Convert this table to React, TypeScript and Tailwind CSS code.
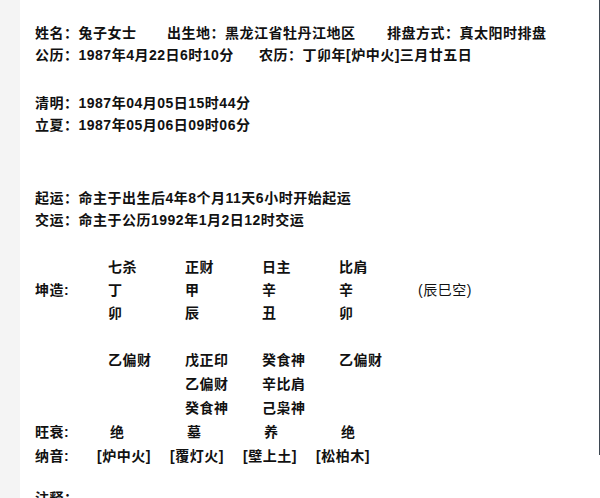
export default function App() {
  const gods = ["七杀", "正财", "日主", "比肩"]
  const stems = ["丁", "甲", "辛", "辛"]
  const branches = ["卯", "辰", "丑", "卯"]
  const hidden = [
    ["乙偏财", "戊正印", "癸食神", "乙偏财"],
    ["", "乙偏财", "辛比肩", ""],
    ["", "癸食神", "己枭神", ""],
  ]
  const states = ["绝", "墓", "养", "绝"]
  const nayin = ["[炉中火]", "[覆灯火]", "[壁上土]", "[松柏木]"]

  return (
    <div className="flex min-h-[498px] bg-white text-[14px] font-bold tracking-[0.5px] text-[#111] font-['Liberation_Sans','Noto_Sans_CJK_SC',sans-serif]">
      {/* left gutter */}
      <div className="w-[20px] shrink-0 bg-[#f4f4f4]" />

      <div className="flex-1 pl-[15px] pt-[22px]">
        <div className="flex h-[22px] items-center whitespace-nowrap">
          <span className="w-[132px]">姓名：兔子女士</span>
          <span className="w-[220px]">出生地：黑龙江省牡丹江地区</span>
          <span>排盘方式：真太阳时排盘</span>
        </div>
        <div className="flex h-[22px] items-center whitespace-nowrap">
          <span className="w-[224px]">公历：1987年4月22日6时10分</span>
          <span>农历：丁卯年[炉中火]三月廿五日</span>
        </div>

        <div className="mt-[26px] flex h-[22px] items-center">清明：1987年04月05日15时44分</div>
        <div className="flex h-[22px] items-center">立夏：1987年05月06日09时06分</div>

        <div className="mt-[51px] flex h-[22px] items-center">起运：命主于出生后4年8个月11天6小时开始起运</div>
        <div className="flex h-[22px] items-center">交运：命主于公历1992年1月2日12时交运</div>

        {/* chart */}
        <div className="mt-[25px] grid grid-cols-[73px_77px_77px_77px_79px_auto] whitespace-nowrap">
          <div className="h-[23px] leading-[23px]" />
          {gods.map((g, i) => (
            <div key={"g" + i} className="h-[23px] leading-[23px]">{g}</div>
          ))}
          <div />

          <div className="h-[23px] leading-[23px]">坤造:</div>
          {stems.map((s, i) => (
            <div key={"s" + i} className="h-[23px] leading-[23px]">{s}</div>
          ))}
          <div className="h-[23px] leading-[23px] font-normal">(辰巳空)</div>

          <div className="h-[23px] leading-[23px]" />
          {branches.map((b, i) => (
            <div key={"b" + i} className="h-[23px] leading-[23px]">{b}</div>
          ))}
          <div />

          <div className="col-span-6 h-[23px]" />

          {hidden.map((row, r) => (
            <div key={"h" + r} className="contents">
              <div className="h-[24px] leading-[24px]" />
              {row.map((h, i) => (
                <div key={i} className="h-[24px] leading-[24px]">{h}</div>
              ))}
              <div />
            </div>
          ))}

          <div className="h-[24px] leading-[24px]">旺衰:</div>
          {states.map((s, i) => (
            <div key={"w" + i} className="h-[24px] pl-[2px] leading-[24px]">{s}</div>
          ))}
          <div />
        </div>

        <div className="flex h-[24px] items-center whitespace-nowrap">
          <span className="w-[62px]">纳音:</span>
          {nayin.map((n, i) => (
            <span key={i} className="w-[73px]">{n}</span>
          ))}
        </div>

        <div className="mt-[18px] flex h-[24px] items-center">注释：</div>
      </div>

      {/* right edge */}
      <div className="h-[455px] w-px shrink-0 bg-[#3e4852]" />
    </div>
  )
}
